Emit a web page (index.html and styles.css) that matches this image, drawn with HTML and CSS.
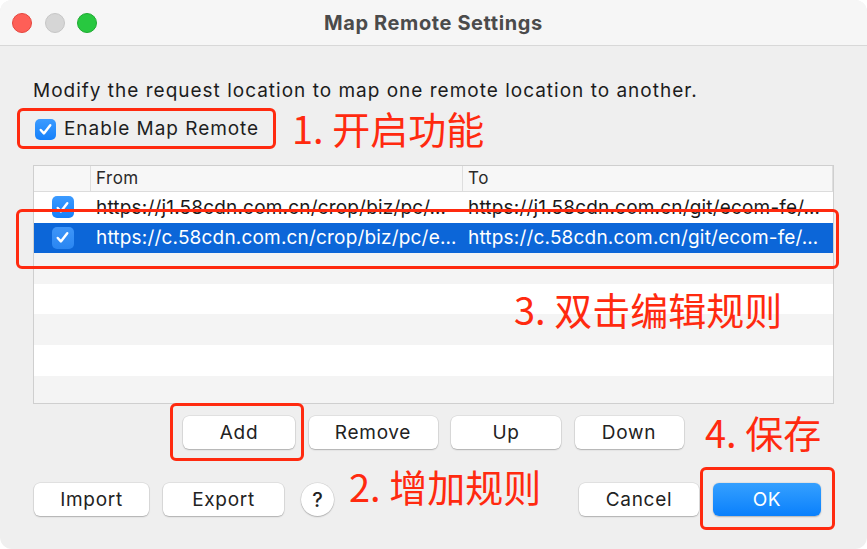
FILE: index.html
```html
<!DOCTYPE html>
<html lang="en">
<head>
<meta charset="utf-8">
<title>Map Remote Settings</title>
<link rel="stylesheet" href="styles.css">
</head>
<body>
<div class="window">
  <div class="titlebar">
    <div class="lights">
      <span class="light red"></span>
      <span class="light grey"></span>
      <span class="light green"></span>
    </div>
    <div class="title">Map Remote Settings</div>
    <div></div>
  </div>
  <div class="content">
    <p class="desc">Modify the request location to map one remote location to another.</p>
    <label class="enable">
      <span class="cb"><svg viewBox="0 0 20 20"><path d="M5 10.5l3.3 3.6L15 5.5" fill="none" stroke="#fff" stroke-width="2.6" stroke-linecap="round" stroke-linejoin="round"/></svg></span>
      <span>Enable Map Remote</span>
    </label>
    <div class="table">
      <div class="thead">
        <div class="c0"></div>
        <div class="c1">From</div>
        <div class="c2">To</div>
      </div>
      <div class="row white">
        <div class="c0"><span class="cb small"><svg viewBox="0 0 20 20"><path d="M5 10.5l3.3 3.6L15 5.5" fill="none" stroke="#fff" stroke-width="2.6" stroke-linecap="round" stroke-linejoin="round"/></svg></span></div>
        <div class="c1">https://j1.58cdn.com.cn/crop/biz/pc/…</div>
        <div class="c2">https://j1.58cdn.com.cn/git/ecom-fe/…</div>
      </div>
      <div class="row sel">
        <div class="c0"><span class="cb small"><svg viewBox="0 0 20 20"><path d="M5 10.5l3.3 3.6L15 5.5" fill="none" stroke="#fff" stroke-width="2.6" stroke-linecap="round" stroke-linejoin="round"/></svg></span></div>
        <div class="c1">https://c.58cdn.com.cn/crop/biz/pc/e…</div>
        <div class="c2">https://c.58cdn.com.cn/git/ecom-fe/…</div>
      </div>
      <div class="row grey"></div>
      <div class="row white"></div>
      <div class="row grey"></div>
      <div class="row white"></div>
      <div class="row grey"></div>
    </div>
    <div class="btnrow1">
      <button class="btn w-add">Add</button>
      <button class="btn w-remove">Remove</button>
      <button class="btn w-up">Up</button>
      <button class="btn w-down">Down</button>
    </div>
    <div class="btnrow2">
      <button class="btn w-import">Import</button>
      <button class="btn w-export">Export</button>
      <button class="help">?</button>
      <div class="spacer"></div>
      <button class="btn w-cancel">Cancel</button>
      <button class="btn primary w-ok">OK</button>
    </div>
  </div>

  <div class="mark m-enable"></div>
  <div class="mark m-row"></div>
  <div class="mark m-add"></div>
  <div class="mark m-ok"></div>
  <div class="note n1">1. 开启功能</div>
  <div class="note n2">2. 增加规则</div>
  <div class="note n3">3. 双击编辑规则</div>
  <div class="note n4">4. 保存</div>
</div>
</body>
</html>
```
FILE: styles.css
```css
* { box-sizing: border-box; }
html, body { margin: 0; padding: 0; background: #ffffff; }
body {
  font-family: Inter, "Noto Sans", "Liberation Sans", sans-serif;
  color: #1e1e1e;
}
.window {
  position: relative;
  width: 867px;
  height: 549px;
  background: #efefef;
  border-radius: 12px;
  overflow: hidden;
}
.titlebar {
  height: 46px;
  background: #f6f6f6;
  border-bottom: 1px solid #d8d8d8;
  display: grid;
  grid-template-columns: 1fr auto 1fr;
  align-items: center;
}
.lights { display: flex; gap: 12.5px; padding-left: 12px; }
.light { width: 20px; height: 20px; border-radius: 50%; display: block; }
.light.red { background: #fe5f57; border: 1px solid #e5463e; }
.light.grey { background: #d6d6d6; border: 1px solid #c6c6c6; }
.light.green { background: #28c840; border: 1px solid #1faa32; }
.title {
  font-size: 20px;
  font-weight: 700;
  color: #4b4b4b;
  letter-spacing: 0.6px;
}
.content { padding: 0 33px 0 33px; }
.desc {
  margin: 33px 0 0 0;
  font-size: 19px;
  line-height: 24px;
  letter-spacing: 1px;
  color: #1c1c1c;
}
.enable {
  display: flex;
  align-items: center;
  gap: 8px;
  margin: 14px 0 0 2px;
  font-size: 19px;
  line-height: 24px;
  letter-spacing: 0.95px;
}
.cb {
  width: 21px; height: 21px;
  border-radius: 5px;
  background: linear-gradient(#3c9bff, #1580fa);
  display: inline-flex;
  align-items: center; justify-content: center;
}
.cb svg { width: 19px; height: 19px; }
.table {
  margin-top: 24px;
  width: 801px;
  height: 239px;
  border: 1px solid #cfcfcf;
  background: #ffffff;
  overflow: hidden;
}
.thead {
  display: grid;
  grid-template-columns: 56px 372px 1fr;
  height: 26px;
  background: #f7f7f7;
  border-bottom: 1px solid #dcdcdc;
  font-size: 17px;
  line-height: 25px;
  letter-spacing: 0.5px;
  color: #2a2a2a;
}
.thead .c1, .thead .c2 { border-left: 1px solid #dedede; padding-left: 5px; }
.thead .c2 { border-right: 1px solid #dedede; }
.row {
  display: grid;
  grid-template-columns: 56px 372px 1fr;
  height: 30.6px;
  align-items: center;
  font-size: 19px;
  letter-spacing: 0.18px;
  color: #1a1a1a;
}
.row.white { background: #ffffff; }
.row.grey { background: #f4f4f4; }
.row .c0 { display: flex; justify-content: center; padding-left: 1px; }
.row .c1, .row .c2 {
  white-space: nowrap;
  padding-left: 6px;
}
.row.sel { background: #0c66d8; color: #ffffff; }
.row.sel .cb { background: linear-gradient(#3e95f8, #2a86f2); }
.cb.small { width: 22px; height: 22px; }
.btnrow1 {
  display: flex;
  gap: 13.5px;
  padding-left: 150px;
  margin-top: 12px;
}
.btn {
  height: 33px;
  border: none;
  border-radius: 6px;
  background: #ffffff;
  box-shadow: 0 0 0 0.5px rgba(0,0,0,0.12), 0 1px 1.5px rgba(0,0,0,0.22);
  font-family: Inter, "Noto Sans", "Liberation Sans", sans-serif;
  font-size: 19px;
  letter-spacing: 0.7px;
  color: #222;
  padding: 0;
}
.w-add { width: 112px; }
.w-remove { width: 129px; }
.w-up { width: 110px; }
.w-down { width: 109px; }
.w-import { width: 115px; }
.w-export { width: 121px; }
.w-cancel { width: 120px; }
.w-ok { width: 108px; }
.btn.primary {
  background: linear-gradient(#35a0ff, #0a80fc);
  color: #fff;
  box-shadow: 0 0.5px 1.5px rgba(0,0,0,0.25);
}
.btnrow2 {
  display: flex;
  align-items: center;
  gap: 14px;
  margin-top: 34px;
  padding-left: 1px;
  padding-right: 13px;
}
.help {
  width: 33px; height: 33px;
  border: none;
  border-radius: 50%;
  background: #ffffff;
  box-shadow: 0 0 0 0.5px rgba(0,0,0,0.12), 0 1px 1.5px rgba(0,0,0,0.22);
  font-family: Inter, "Liberation Sans", sans-serif;
  font-size: 20px;
  font-weight: 500;
  color: #222;
  margin-left: 3px;
  padding: 0;
}
.spacer { flex: 1; }

.mark {
  position: absolute;
  border: 3px solid #ff2a0f;
  border-radius: 6px;
}
.m-enable { left: 17px; top: 108px; width: 259px; height: 41px; }
.m-row { left: 16px; top: 209px; width: 823px; height: 60px; }
.m-add { left: 170px; top: 403px; width: 134px; height: 58px; }
.m-ok { left: 700px; top: 467px; width: 135px; height: 63px; }
.note {
  position: absolute;
  color: #ff2a0f;
  font-family: "Noto Sans CJK SC", "Noto Sans", sans-serif;
  font-weight: 400;
  font-size: 38px;
  line-height: 42px;
  white-space: nowrap;
}
.n1 { left: 292px; top: 107px; }
.n2 { left: 349px; top: 465px; }
.n3 { left: 514px; top: 288px; }
.n4 { left: 705px; top: 411px; }
```
